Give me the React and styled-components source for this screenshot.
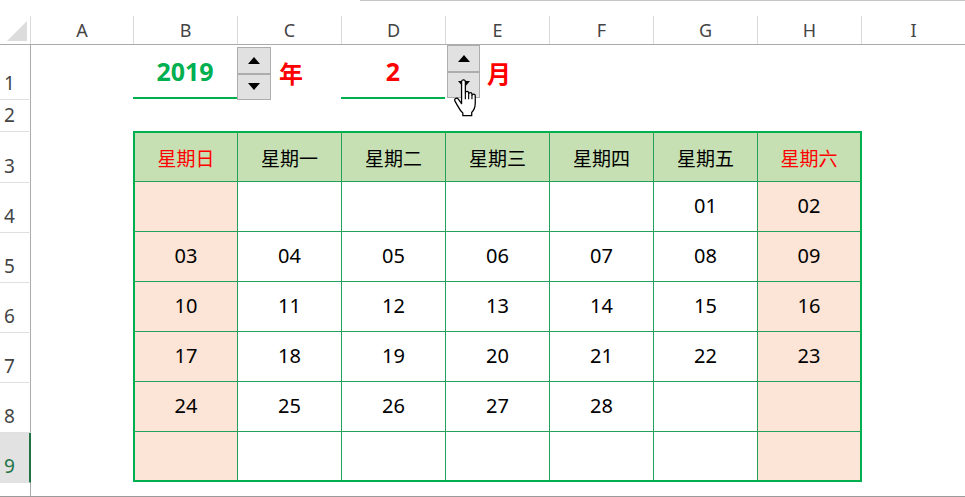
import React, { useState } from 'react';
import styled, { createGlobalStyle } from 'styled-components';

const GlobalStyle = createGlobalStyle`
  *, *::before, *::after { box-sizing: border-box; }
  html, body { margin: 0; padding: 0; background: #fff; overflow: hidden; }
  body { font-family: "Noto Sans", "Noto Sans CJK SC", sans-serif; }
`;

const GREEN = '#00b050';
const GRID_LINE = '#23a05a';

const Page = styled.div`
  width: 965px;
  height: 497px;
  display: flex;
  flex-direction: column;
  background: #fff;
`;

const TopStrip = styled.div`
  height: 16px;
  padding-left: 360px;
`;

const FormulaEdge = styled.div`
  height: 1px;
  background: #c6c6c6;
`;

const ColumnHeaderRow = styled.div`
  display: flex;
  height: 29px;
  border-bottom: 1px solid #ababab;
`;

const Corner = styled.div`
  width: 31px;
  border-right: 1px solid #dadada;
  display: flex;
  align-items: flex-end;
  justify-content: flex-end;
  padding: 0 3px 3px 0;
`;

const CornerTriangle = styled.div`
  width: 0;
  height: 0;
  border-left: 20px solid transparent;
  border-bottom: 20px solid #dcdcdc;
`;

const ColHeader = styled.div`
  width: ${p => p.$w}px;
  flex: ${p => (p.$grow ? 1 : 'none')};
  border-right: ${p => (p.$grow ? 'none' : '1px solid #dadada')};
  display: flex;
  align-items: center;
  justify-content: center;
  font-size: 18px;
  color: #444;
`;

const Body = styled.div`
  flex: 1;
  display: flex;
  border-bottom: 1px solid #9b9b9b;
`;

const RowHeaders = styled.div`
  width: 31px;
  display: flex;
  flex-direction: column;
`;

const RowHeader = styled.div`
  height: ${p => p.$h}px;
  border-bottom: 1px solid #e0e0e0;
  border-right: ${p => (p.$selected ? '2px solid #217346' : '1px solid #ababab')};
  background: ${p => (p.$selected ? '#e2e2e2' : '#fff')};
  color: ${p => (p.$selected ? '#217346' : '#444')};
  display: flex;
  align-items: flex-end;
  padding: 0 0 6px 4px;
  font-size: 19px;
  line-height: 20px;
`;

const RowFiller = styled.div`
  flex: 1;
  border-right: 1px solid #ababab;
`;

const Content = styled.div`
  flex: 1;
  display: flex;
  flex-direction: column;
`;

const Controls = styled.div`
  height: 55px;
  display: grid;
  grid-template-columns: 102px repeat(4, 104px);
`;

const ValueField = styled.div`
  grid-column: ${p => p.$col};
  height: 54px;
  border-bottom: 2px solid ${GREEN};
  display: flex;
  align-items: center;
  justify-content: center;
  font-size: 25px;
  font-weight: 700;
  color: ${p => p.$color};
`;

const SpinCell = styled.div`
  grid-column: ${p => p.$col};
  display: flex;
  align-items: flex-start;
  padding-left: ${p => p.$shift}px;
`;

const SpinBox = styled.div`
  position: relative;
  width: ${p => p.$w}px;
  height: 53px;
  margin-top: ${p => p.$top}px;
  display: flex;
  flex-direction: column;
  border: 1px solid #adadad;
  background: #e1e1e1;
`;

const SpinHalf = styled.button`
  flex: 1;
  display: flex;
  align-items: center;
  justify-content: center;
  border: none;
  padding: 0;
  background: transparent;
  border-bottom: ${p => (p.$top ? '2px solid #adadad' : 'none')};
  cursor: pointer;
`;

const Arrow = styled.span`
  width: 0;
  height: 0;
  border-left: 6px solid transparent;
  border-right: 6px solid transparent;
  ${p => (p.$up ? 'border-bottom: 7px solid #000;' : 'border-top: 7px solid #000;')}
`;

const Unit = styled.div`
  align-self: center;
  margin-left: ${p => p.$gap}px;
  font-size: 24px;
  font-weight: 700;
  color: #ff0000;
  font-family: "Noto Sans CJK SC", sans-serif;
`;

const HandCursor = styled.svg`
  position: absolute;
  left: 5px;
  top: 33px;
  pointer-events: none;
`;

const RowGap = styled.div`
  height: 31px;
`;

const Calendar = styled.div`
  margin-left: 102px;
  width: 729px;
  border: 2px solid ${GREEN};
  display: grid;
  grid-template-columns: 102px repeat(5, 104px) 103px;
  grid-template-rows: 49px repeat(5, 50px) 48px;
`;

const Cell = styled.div`
  border-left: ${p => (p.$first ? 'none' : `1px solid ${GRID_LINE}`)};
  border-bottom: ${p => (p.$lastRow ? 'none' : `1px solid ${GRID_LINE}`)};
  background: ${p => p.$bg};
  color: ${p => p.$color};
  display: flex;
  align-items: center;
  justify-content: center;
  padding-bottom: ${p => (p.$head ? 0 : 2)}px;
  font-size: ${p => (p.$head ? 19 : 20)}px;
  font-family: ${p => (p.$head ? '"Noto Sans CJK SC", sans-serif' : '"Noto Sans", sans-serif')};
`;

const COLUMNS = [
  ['A', 103], ['B', 104], ['C', 104], ['D', 104], ['E', 104],
  ['F', 104], ['G', 104], ['H', 104],
];

const ROW_HEIGHTS = [55, 32, 51, 50, 50, 50, 50, 50, 50];
const WEEK = ['星期日', '星期一', '星期二', '星期三', '星期四', '星期五', '星期六'];

const Hand = () => (
  <HandCursor width="26" height="38" viewBox="0 0 20 30">
    <path
      d="M6.5 2.2 C6.5 1.3 7.2 0.7 8 0.7 C8.8 0.7 9.5 1.3 9.5 2.2 V11 C9.5 10.2 10.1 9.7 10.8 9.7 C11.5 9.7 12.1 10.2 12.1 11 V12 C12.1 11.3 12.7 10.8 13.4 10.8 C14.1 10.8 14.7 11.4 14.7 12.1 V13 C14.7 12.4 15.3 12 16 12 C16.7 12 17.3 12.6 17.3 13.3 V19 C17.3 22.5 16 25 14.5 26.5 V29 H7.5 V26.8 C6 25.5 4.5 23.2 3.3 21 L1.3 17.5 C0.8 16.6 1.1 15.6 2 15.3 C2.8 15 3.6 15.4 4.1 16.1 L6.5 19.5 Z"
      fill="#fff"
      stroke="#000"
      strokeWidth="1"
      strokeLinejoin="round"
    />
    <path d="M9.5 11 V16 M12.1 12 V16 M14.7 13 V16" stroke="#000" strokeWidth="0.9" fill="none" />
  </HandCursor>
);

const Spinner = ({ width, top, onUp, onDown, children }) => (
  <SpinBox $w={width} $top={top}>
    <SpinHalf $top onClick={onUp}><Arrow $up /></SpinHalf>
    <SpinHalf onClick={onDown}><Arrow /></SpinHalf>
    {children}
  </SpinBox>
);

const buildDays = (year, month) => {
  const first = new Date(year, month - 1, 1).getDay();
  const count = new Date(year, month, 0).getDate();
  const cells = [];
  for (let i = 0; i < 42; i++) {
    const d = i - first + 1;
    cells.push(d >= 1 && d <= count ? String(d).padStart(2, '0') : '');
  }
  return cells;
};

const App = () => {
  const [year, setYear] = useState(2019);
  const [month, setMonth] = useState(2);

  const days = buildDays(year, month);
  const isWeekend = col => col === 0 || col === 6;

  return (
    <Page>
      <GlobalStyle />
      <TopStrip><FormulaEdge /></TopStrip>
      <ColumnHeaderRow>
        <Corner><CornerTriangle /></Corner>
        {COLUMNS.map(([name, w]) => (
          <ColHeader key={name} $w={w}>{name}</ColHeader>
        ))}
        <ColHeader $grow>I</ColHeader>
      </ColumnHeaderRow>

      <Body>
        <RowHeaders>
          {ROW_HEIGHTS.map((h, i) => (
            <RowHeader key={i} $h={h} $selected={i === 8}>{i + 1}</RowHeader>
          ))}
          <RowFiller />
        </RowHeaders>

        <Content>
          <Controls>
            <ValueField $col={2} $color={GREEN}>{year}</ValueField>
            <SpinCell $col={3} $shift={0}>
              <Spinner width={34} top={2} onUp={() => setYear(year + 1)} onDown={() => setYear(year - 1)} />
              <Unit $gap={8}>年</Unit>
            </SpinCell>
            <ValueField $col={4} $color="#ff0000">{month}</ValueField>
            <SpinCell $col={5} $shift={2}>
              <Spinner
                width={33}
                top={0}
                onUp={() => setMonth(month === 12 ? 12 : month + 1)}
                onDown={() => setMonth(month === 1 ? 1 : month - 1)}
              >
                <Hand />
              </Spinner>
              <Unit $gap={7}>月</Unit>
            </SpinCell>
          </Controls>
          <RowGap />

          <Calendar>
            {WEEK.map((w, c) => (
              <Cell key={w} $head $first={c === 0} $bg="#c6e0b4" $color={isWeekend(c) ? '#ff0000' : '#000'}>
                {w}
              </Cell>
            ))}
            {days.map((d, i) => {
              const c = i % 7;
              return (
                <Cell
                  key={i}
                  $first={c === 0}
                  $lastRow={i >= 35}
                  $bg={isWeekend(c) ? '#fce4d6' : '#fff'}
                  $color="#000"
                >
                  {d}
                </Cell>
              );
            })}
          </Calendar>
        </Content>
      </Body>
    </Page>
  );
};

export default App;
